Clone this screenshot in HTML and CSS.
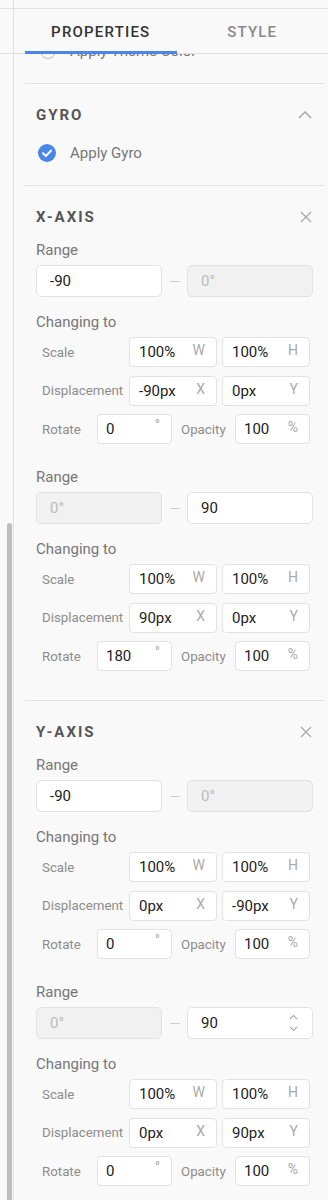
FILE: index.html
```html
<!DOCTYPE html>
<html lang="en">
<head>
<meta charset="utf-8">
<title>Properties</title>
<link rel="stylesheet" href="styles.css">
</head>
<body>
<div class="shell">
  <aside class="gutter">
    <div class="g-top"></div>
    <div class="g-tabs"></div>
    <div class="thumb"></div>
  </aside>
  <main class="panel">
    <div class="p-top"></div>
    <nav class="tabs">
      <div class="tab active">PROPERTIES</div>
      <div class="tab">STYLE</div>
    </nav>
    <div class="scroll">
      <section class="sec peek">
        <div class="check-row">
          <span class="radio"></span>
          <span class="check-label">Apply Theme Color</span>
        </div>
      </section>

      <section class="sec gyro">
        <div class="sec-head">
          <h2>GYRO</h2>
          <svg class="icon" width="14" height="8" viewBox="0 0 14 8"><path d="M1 7 L7 1 L13 7" fill="none" stroke="#aaa" stroke-width="1.5"/></svg>
        </div>
        <div class="check-row gap">
          <span class="checkbox"><svg width="18" height="18" viewBox="0 0 18 18"><circle cx="9" cy="9" r="9" fill="#4a86e8"/><path d="M5 9.3 L7.9 12 L13 6.6" fill="none" stroke="#fff" stroke-width="2" stroke-linecap="round" stroke-linejoin="round"/></svg></span>
          <span class="check-label">Apply Gyro</span>
        </div>
      </section>

      <section class="sec axis">
        <div class="sec-head">
          <h2>X-AXIS</h2>
          <svg class="icon" width="12" height="12" viewBox="0 0 12 12"><path d="M1 1 L11 11 M11 1 L1 11" fill="none" stroke="#aaa" stroke-width="1.3"/></svg>
        </div>
        <div class="block">
          <div class="label">Range</div>
          <div class="range-row">
            <div class="rinput"><span>-90</span></div>
            <div class="dash"><span></span></div>
            <div class="rinput disabled"><span>0°</span></div>
          </div>
          <div class="label sub">Changing to</div>
          <div class="rows">
            <div class="row"><span class="rl wide">Scale</span><div class="inp"><span class="v">100%</span><span class="sx">W</span></div><div class="inp"><span class="v">100%</span><span class="sx">H</span></div></div>
            <div class="row"><span class="rl wide">Displacement</span><div class="inp"><span class="v">-90px</span><span class="sx">X</span></div><div class="inp"><span class="v">0px</span><span class="sx">Y</span></div></div>
            <div class="row"><span class="rl rot">Rotate</span><div class="inp sm"><span class="v">0</span><span class="sx deg">°</span></div><span class="rl op">Opacity</span><div class="inp sm"><span class="v">100</span><span class="sx">%</span></div></div>
          </div>
        </div>
        <div class="block second">
          <div class="label">Range</div>
          <div class="range-row">
            <div class="rinput disabled"><span>0°</span></div>
            <div class="dash"><span></span></div>
            <div class="rinput"><span>90</span></div>
          </div>
          <div class="label sub">Changing to</div>
          <div class="rows">
            <div class="row"><span class="rl wide">Scale</span><div class="inp"><span class="v">100%</span><span class="sx">W</span></div><div class="inp"><span class="v">100%</span><span class="sx">H</span></div></div>
            <div class="row"><span class="rl wide">Displacement</span><div class="inp"><span class="v">90px</span><span class="sx">X</span></div><div class="inp"><span class="v">0px</span><span class="sx">Y</span></div></div>
            <div class="row"><span class="rl rot">Rotate</span><div class="inp sm"><span class="v">180</span><span class="sx deg">°</span></div><span class="rl op">Opacity</span><div class="inp sm"><span class="v">100</span><span class="sx">%</span></div></div>
          </div>
        </div>
      </section>

      <section class="sec axis">
        <div class="sec-head">
          <h2>Y-AXIS</h2>
          <svg class="icon" width="12" height="12" viewBox="0 0 12 12"><path d="M1 1 L11 11 M11 1 L1 11" fill="none" stroke="#aaa" stroke-width="1.3"/></svg>
        </div>
        <div class="block">
          <div class="label">Range</div>
          <div class="range-row">
            <div class="rinput"><span>-90</span></div>
            <div class="dash"><span></span></div>
            <div class="rinput disabled"><span>0°</span></div>
          </div>
          <div class="label sub">Changing to</div>
          <div class="rows">
            <div class="row"><span class="rl wide">Scale</span><div class="inp"><span class="v">100%</span><span class="sx">W</span></div><div class="inp"><span class="v">100%</span><span class="sx">H</span></div></div>
            <div class="row"><span class="rl wide">Displacement</span><div class="inp"><span class="v">0px</span><span class="sx">X</span></div><div class="inp"><span class="v">-90px</span><span class="sx">Y</span></div></div>
            <div class="row"><span class="rl rot">Rotate</span><div class="inp sm"><span class="v">0</span><span class="sx deg">°</span></div><span class="rl op">Opacity</span><div class="inp sm"><span class="v">100</span><span class="sx">%</span></div></div>
          </div>
        </div>
        <div class="block second">
          <div class="label">Range</div>
          <div class="range-row">
            <div class="rinput disabled"><span>0°</span></div>
            <div class="dash"><span></span></div>
            <div class="rinput spin"><span>90</span><svg width="9" height="18" viewBox="0 0 9 18"><path d="M1 5 L4.5 1.5 L8 5 M1 13 L4.5 16.5 L8 13" fill="none" stroke="#aaa" stroke-width="1.1"/></svg></div>
          </div>
          <div class="label sub">Changing to</div>
          <div class="rows">
            <div class="row"><span class="rl wide">Scale</span><div class="inp"><span class="v">100%</span><span class="sx">W</span></div><div class="inp"><span class="v">100%</span><span class="sx">H</span></div></div>
            <div class="row"><span class="rl wide">Displacement</span><div class="inp"><span class="v">0px</span><span class="sx">X</span></div><div class="inp"><span class="v">90px</span><span class="sx">Y</span></div></div>
            <div class="row"><span class="rl rot">Rotate</span><div class="inp sm"><span class="v">0</span><span class="sx deg">°</span></div><span class="rl op">Opacity</span><div class="inp sm"><span class="v">100</span><span class="sx">%</span></div></div>
          </div>
        </div>
      </section>
    </div>
  </main>
</div>
</body>
</html>
```
FILE: styles.css
```css
* { box-sizing: border-box; }
html, body {
  margin: 0;
  padding: 0;
  background: #f9f9f9;
  font-family: Roboto, "Liberation Sans", sans-serif;
  height: 1200px;
  overflow: hidden;
}
.shell {
  display: flex;
  height: 1200px;
}
.gutter {
  width: 14px;
  flex: none;
  border-right: 1px solid #e0e0e0;
}
.g-top { height: 9px; border-bottom: 1px solid #e0e0e0; }
.g-tabs { height: 45px; border-bottom: 1px solid #e0e0e0; }
.thumb {
  margin: 469px 0 0 7px;
  width: 5px;
  height: 720px;
  background: #bdbdbd;
  border-radius: 3px 3px 0 0;
}
.panel {
  flex: 1;
  min-width: 0;
  display: flex;
  flex-direction: column;
}
.p-top { height: 9px; border-bottom: 1px solid #e0e0e0; flex: none; }
.tabs {
  flex: none;
  height: 45px;
  border-bottom: 1px solid #e0e0e0;
  display: flex;
  padding-left: 11px;
}
.tab {
  width: 153px;
  height: 45px;
  display: flex;
  align-items: center;
  justify-content: center;
  padding-top: 3px;
  border-bottom: 3px solid transparent;
  font-size: 15px;
  font-weight: 500;
  letter-spacing: 1.2px;
  color: #8a8a8a;
}
.tab.active {
  color: #333;
  border-bottom-color: #4a86e8;
}
.scroll {
  flex: 1;
  overflow: hidden;
  padding: 0 4px 0 11px;
}
.sec {
  border-bottom: 1px solid #e0e0e0;
  padding-left: 11px;
}
.peek {
  margin-top: -14px;
  padding-bottom: 21px;
}
.gyro {
  padding-top: 21px;
  padding-bottom: 21px;
}
.axis {
  padding-top: 21px;
  padding-bottom: 29px;
}
.sec-head {
  height: 20px;
  display: flex;
  align-items: center;
  justify-content: space-between;
  padding-right: 12px;
}
.sec-head h2 {
  margin: 0;
  font-size: 15px;
  font-weight: 700;
  letter-spacing: 2px;
  color: #555;
}
.icon { display: block; }
.check-row {
  height: 22px;
  display: flex;
  align-items: center;
}
.check-row.gap { margin-top: 17px; }
.radio {
  width: 16px;
  height: 16px;
  margin-left: 4px;
  border: 1.5px solid #bbb;
  border-radius: 50%;
  margin-right: 14px;
}
.checkbox {
  width: 18px;
  height: 18px;
  margin-left: 2px;
  margin-right: 14px;
}
.checkbox svg { display: block; }
.check-label {
  font-size: 15px;
  color: #777;
}
.block { margin-top: 13px; }
.block.second { margin-top: 23px; }
.label {
  font-size: 15px;
  line-height: 20px;
  color: #777;
  margin-bottom: 5px;
}
.label.sub { margin-top: 15px; }
.range-row {
  width: 277px;
  height: 32px;
  display: flex;
}
.rinput {
  width: 126px;
  height: 32px;
  background: #fff;
  border: 1px solid #e2e2e2;
  border-radius: 5px;
  display: flex;
  align-items: center;
  justify-content: space-between;
  padding: 0 14px 0 13px;
  font-size: 15px;
  color: #222;
}
.rinput.disabled {
  background: #f1f1f1;
  color: #bbb;
}
.rinput.spin svg { display: block; }
.dash {
  flex: 1;
  display: flex;
  align-items: center;
  justify-content: center;
}
.dash span {
  width: 10px;
  height: 1px;
  background: #ccc;
}
.rows {
  display: flex;
  flex-direction: column;
  gap: 8.5px;
  padding-left: 6px;
}
.row {
  height: 30px;
  display: flex;
  align-items: center;
  gap: 5px;
}
.rl {
  font-size: 13.3px;
  color: #8c8c8c;
  flex: none;
}
.rl.wide { width: 82px; }
.rl.rot { width: 50px; }
.rl.op { width: 49px; margin-left: 4px; }
.inp {
  width: 88px;
  height: 30px;
  flex: none;
  background: #fff;
  border: 1px solid #e2e2e2;
  border-radius: 4px;
  display: flex;
  align-items: center;
  justify-content: space-between;
  padding: 0 11px 0 9px;
}
.inp.sm { width: 75px; padding-left: 8px; }
.v {
  font-size: 15px;
  color: #222;
}
.sx {
  font-size: 14px;
  color: #aaa;
  margin-top: -4px;
}
.sx.deg { margin-top: -8px; }
```
